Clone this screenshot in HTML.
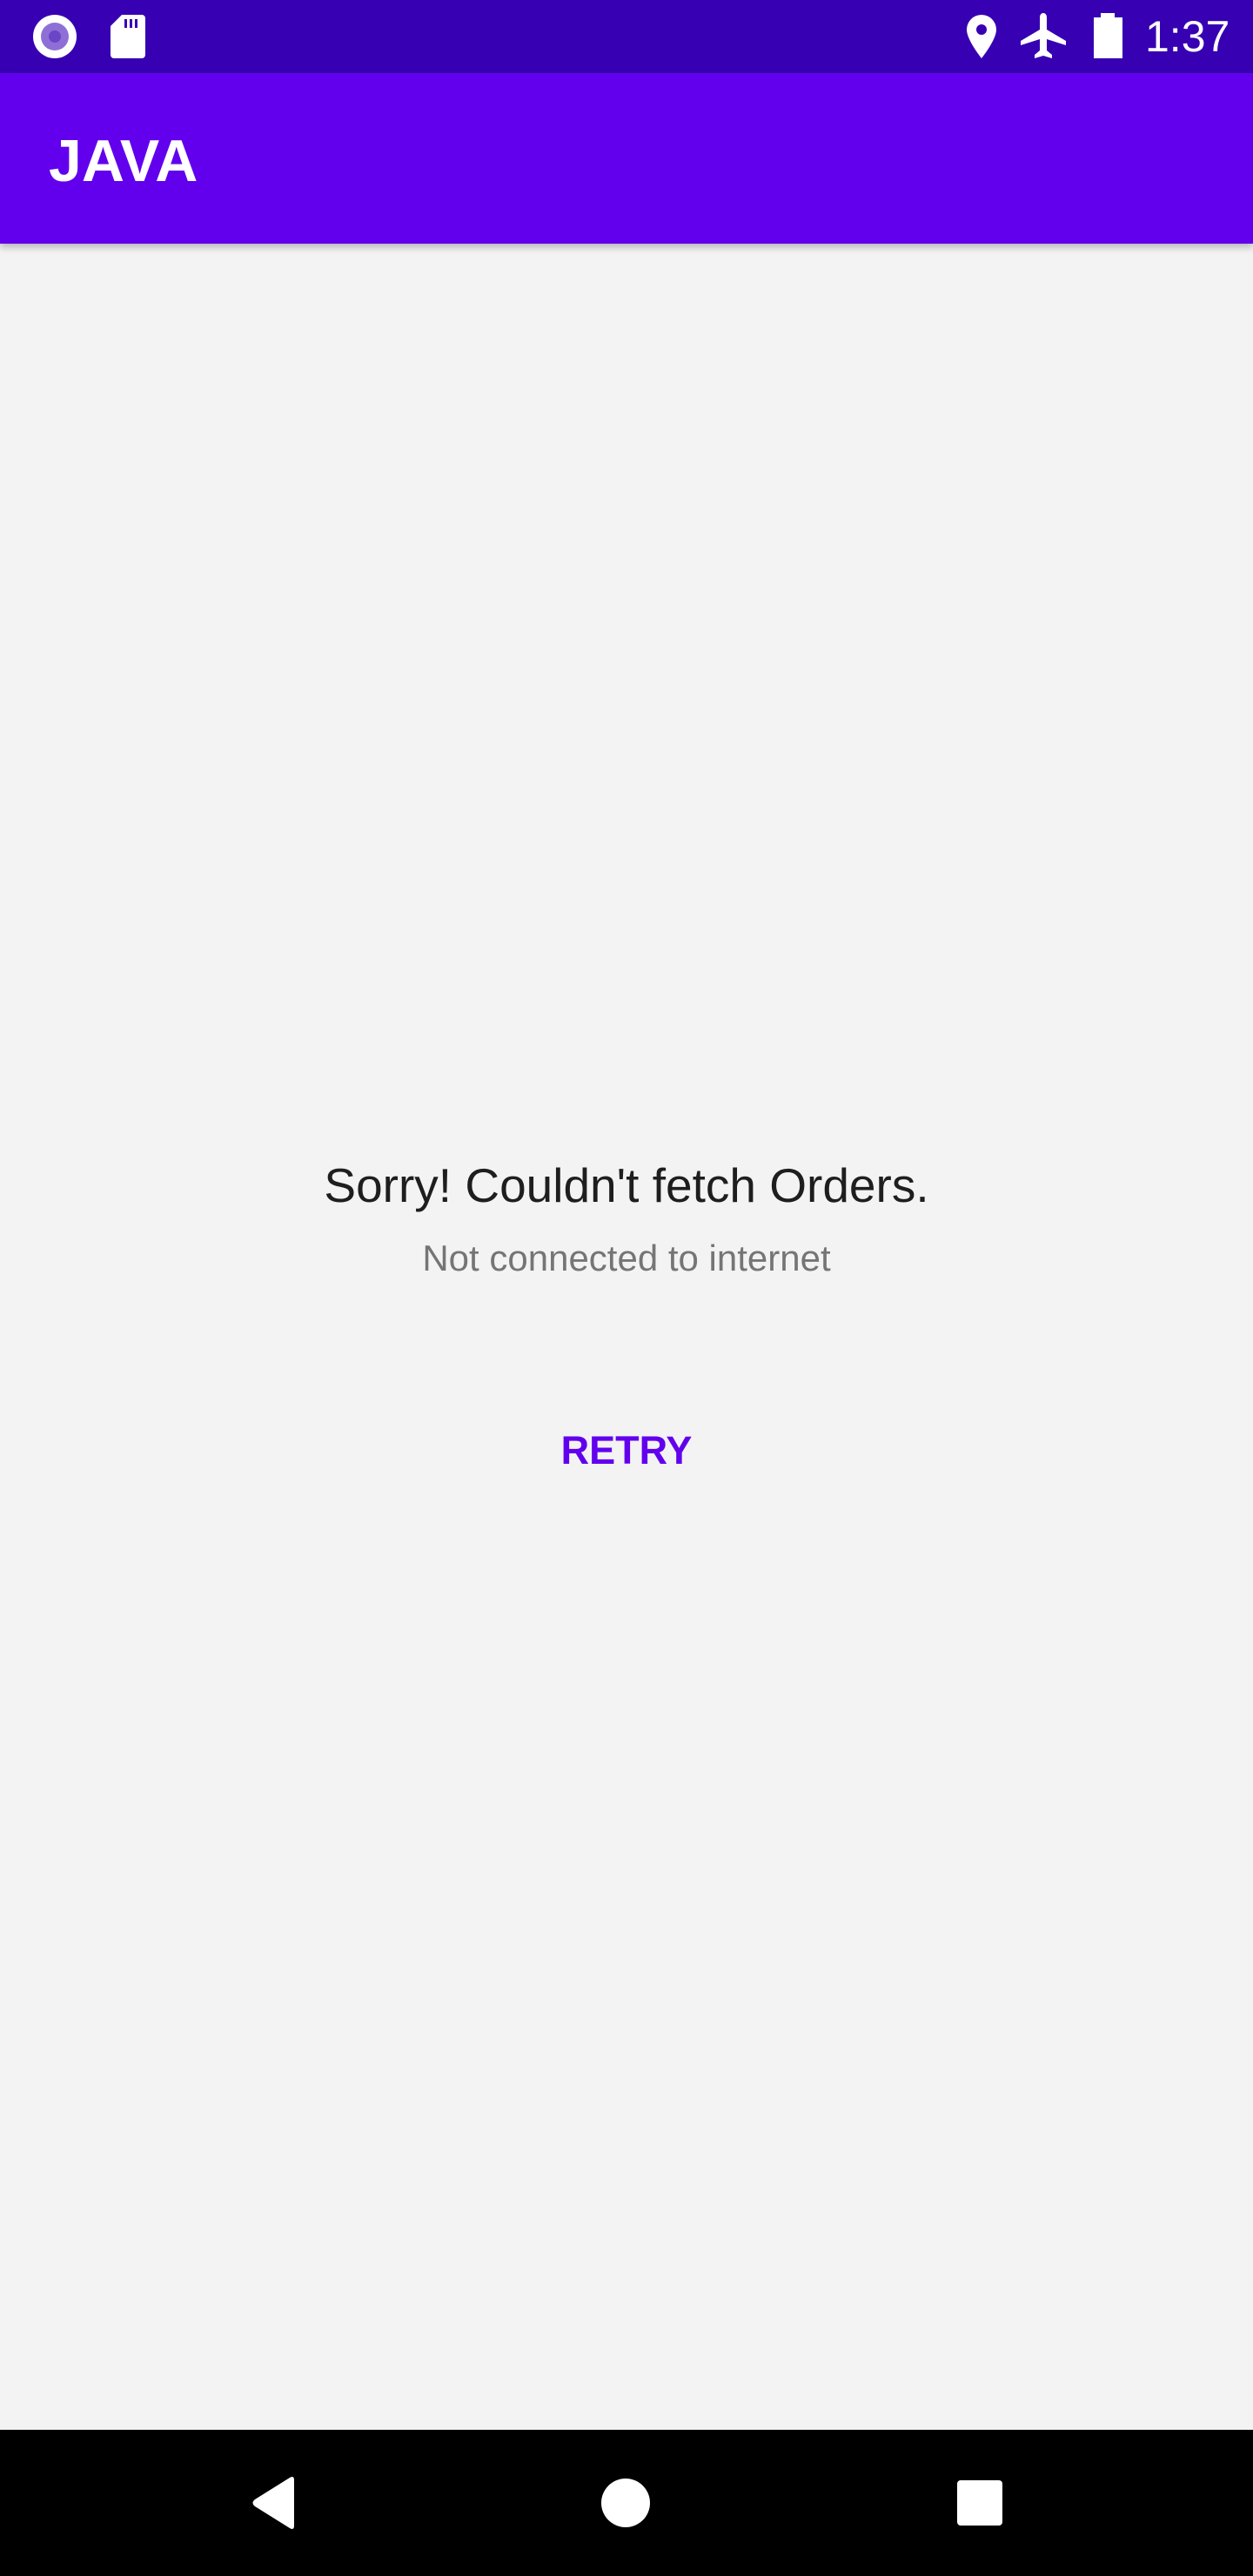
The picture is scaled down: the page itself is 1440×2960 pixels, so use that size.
<!DOCTYPE html>
<html><head><meta charset="utf-8"><style>
html,body{margin:0;padding:0;}
body{width:1440px;height:2960px;background:#f3f3f3;position:relative;overflow:hidden;font-family:"Liberation Sans",sans-serif;}
.sb{position:absolute;left:0;top:0;width:1440px;height:84px;background:#3700B3;}
.ab{position:absolute;left:0;top:84px;width:1440px;height:196px;background:#6200EE;box-shadow:0 4px 8px rgba(0,0,0,0.25);}
.title{position:absolute;left:56px;top:145px;color:#fff;font-size:68px;font-weight:bold;line-height:80px;}
.time{position:absolute;left:1316px;top:14px;color:#fff;font-size:50px;line-height:56px;}
.t1{position:absolute;left:0;width:1440px;text-align:center;top:1322px;font-size:55px;color:#1e1e1e;line-height:80px;}
.t2{position:absolute;left:0;width:1440px;text-align:center;top:1418px;font-size:42px;color:#757575;line-height:56px;}
.rt{position:absolute;left:0;width:1440px;text-align:center;top:1637px;font-size:45px;font-weight:bold;color:#6200EE;line-height:60px;}
.nav{position:absolute;left:0;top:2792px;width:1440px;height:168px;background:#000;}
</style></head><body>
<div class="sb">
<svg width="1440" height="84" style="position:absolute;left:0;top:0">
<circle cx="63" cy="42" r="25" fill="#fff"/><circle cx="63" cy="42" r="16" fill="#8e6fd6"/><circle cx="63" cy="42" r="7" fill="#6a45c8"/>
<path d="M140 17 H163 a4 4 0 0 1 4 4 V63 a4 4 0 0 1 -4 4 H131 a4 4 0 0 1 -4 -4 V30 Z" fill="#fff"/>
<rect x="143" y="22" width="3" height="10" fill="#3700B3"/><rect x="149" y="22" width="3" height="10" fill="#3700B3"/><rect x="155" y="22" width="3" height="10" fill="#3700B3"/>
<path d="M1128 17 a17 17 0 0 1 17 17 c0 12 -17 33 -17 33 c0 0 -17 -21 -17 -33 a17 17 0 0 1 17 -17 z" fill="#fff"/><circle cx="1128" cy="34" r="6" fill="#3700B3"/>
<path d="M1199 15 c3 0 4 3 4 5 v14 l22 13 v5 l-22 -7 v13 l6 5 v4 l-10 -3 l-10 3 v-4 l6 -5 v-13 l-22 7 v-5 l22 -13 v-14 c0 -2 1 -5 4 -5 z" fill="#fff"/>
<rect x="1265" y="15" width="16" height="6" fill="#fff"/><rect x="1257" y="20" width="33" height="47" fill="#fff"/>
</svg>
<div class="time">1:37</div>
</div>
<div class="ab"><div class="title" style="top:61px">JAVA</div></div>
<div class="t1">Sorry! Couldn't fetch Orders.</div>
<div class="t2">Not connected to internet</div>
<div class="rt">RETRY</div>
<div class="nav">
<svg width="1440" height="168" style="position:absolute;left:0;top:0">
<path d="M338 58 L338 110 Q338 116 333 113 L293 88 Q288 84 293 80 L333 55 Q338 52 338 58 Z" fill="#fff"/>
<circle cx="719" cy="84" r="28" fill="#fff"/>
<rect x="1100" y="58" width="52" height="52" rx="4" fill="#fff"/>
</svg>
</div>
</body></html>
